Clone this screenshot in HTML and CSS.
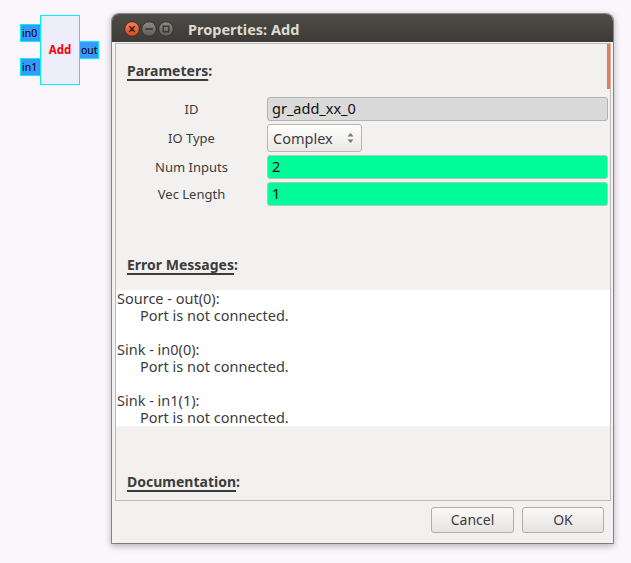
FILE: index.html
```html
<!DOCTYPE html>
<html>
<head>
<meta charset="utf-8">
<title>Properties: Add</title>
<link rel="stylesheet" href="styles.css">
</head>
<body>
<div class="node"><span class="node-name">Add</span></div>
<div class="port port-in0">in0</div>
<div class="port port-in1">in1</div>
<div class="port port-out">out</div>

<div class="window">
  <div class="titlebar">
    <div class="wbtns">
      <svg class="wbtn" width="16" height="16" viewBox="0 0 16 16">
        <defs>
          <linearGradient id="gc" x1="0" y1="0" x2="0" y2="1">
            <stop offset="0" stop-color="#f5835a"/>
            <stop offset="1" stop-color="#d9461a"/>
          </linearGradient>
        </defs>
        <circle cx="8" cy="8" r="7.3" fill="url(#gc)" stroke="#3a2a22" stroke-width="0.9"/>
        <path d="M5.6 5.6 L10.4 10.4 M10.4 5.6 L5.6 10.4" stroke="#3b1c10" stroke-width="1.4" stroke-linecap="round"/>
      </svg>
      <svg class="wbtn" width="16" height="16" viewBox="0 0 16 16">
        <defs>
          <linearGradient id="gg" x1="0" y1="0" x2="0" y2="1">
            <stop offset="0" stop-color="#8a8984"/>
            <stop offset="1" stop-color="#5e5d59"/>
          </linearGradient>
        </defs>
        <circle cx="8" cy="8" r="7.3" fill="url(#gg)" stroke="#2e2d2a" stroke-width="0.9"/>
        <path d="M4.8 8 L11.2 8" stroke="#34332f" stroke-width="1.6" stroke-linecap="round"/>
      </svg>
      <svg class="wbtn" width="16" height="16" viewBox="0 0 16 16">
        <circle cx="8" cy="8" r="7.3" fill="url(#gg)" stroke="#2e2d2a" stroke-width="0.9"/>
        <rect x="5.2" y="5.2" width="5.6" height="5.6" fill="none" stroke="#34332f" stroke-width="1.3"/>
      </svg>
    </div>
    <div class="title">Properties: Add</div>
  </div>
  <div class="wbody">
    <div class="frame">
      <div class="scroll">
        <div class="section-head"><span class="u">Parameters</span>:</div>
        <div class="params">
          <div class="row">
            <div class="label">ID</div>
            <div class="entry entry-gray">gr_add_xx_0</div>
          </div>
          <div class="row row-combo">
            <div class="label">IO Type</div>
            <div class="combo">
              <span class="combo-text">Complex</span>
              <svg class="combo-arrows" width="7" height="12" viewBox="0 0 7 12">
                <path d="M0.5 4.5 L3.5 1 L6.5 4.5 Z" fill="#77766f"/>
                <path d="M0.5 7.5 L3.5 11 L6.5 7.5 Z" fill="#77766f"/>
              </svg>
            </div>
          </div>
          <div class="row">
            <div class="label">Num Inputs</div>
            <div class="entry entry-green">2</div>
          </div>
          <div class="row">
            <div class="label">Vec Length</div>
            <div class="entry entry-green">1</div>
          </div>
        </div>
        <div class="section-head head-err"><span class="u">Error Messages</span>:</div>
        <div class="errors">
          <div class="eline">Source - out(0):</div>
          <div class="eline indent">Port is not connected.</div>
          <div class="eline"></div>
          <div class="eline">Sink - in0(0):</div>
          <div class="eline indent">Port is not connected.</div>
          <div class="eline"></div>
          <div class="eline">Sink - in1(1):</div>
          <div class="eline indent">Port is not connected.</div>
        </div>
        <div class="section-head head-doc"><span class="u">Documentation</span>:</div>
      </div>
      <div class="vscroll"></div>
    </div>
    <div class="actions">
      <div class="btn btn-cancel">Cancel</div>
      <div class="btn btn-ok">OK</div>
    </div>
  </div>
</div>
</body>
</html>
```

FILE: styles.css
```css
* { box-sizing: border-box; }
html, body { margin: 0; padding: 0; }
body {
  background: #fcf7fc;
  width: 631px;
  height: 563px;
  position: relative;
  overflow: hidden;
  font-family: "Noto Sans", "Open Sans", sans-serif;
  color: #3c3c3c;
}

/* canvas block */
.node {
  position: absolute;
  left: 40px;
  top: 15px;
  width: 40px;
  height: 70px;
  background: #eeeefa;
  border: 1px solid #00f0ff;
  display: flex;
  align-items: center;
  justify-content: center;
}
.node-name {
  color: #ff0000;
  font-weight: 700;
  font-size: 11.5px;
  line-height: 14px;
}
.port {
  position: absolute;
  height: 18px;
  background: #3799f8;
  border: 1px solid #00f0ff;
  color: #000;
  font-size: 10.5px;
  line-height: 16px;
  padding-left: 1px;
}
.port-in0 { left: 20px; top: 24px; width: 21px; }
.port-in1 { left: 20px; top: 58px; width: 21px; }
.port-out { left: 79px; top: 41px; width: 20px; padding-left: 1px; }

/* window */
.window {
  position: absolute;
  left: 112px;
  top: 14px;
  width: 501px;
  height: 529px;
  background: #f2f1f0;
  border-radius: 7px 7px 0 0;
  box-shadow: 0 0 0 1px rgba(70, 68, 64, 0.55), 0 2px 7px 1px rgba(0, 0, 0, 0.3);
  display: flex;
  flex-direction: column;
}
.titlebar {
  height: 28px;
  flex: none;
  background: linear-gradient(#4d4c47, #3c3b37);
  border-radius: 7px 7px 0 0;
  display: flex;
  align-items: center;
  padding-left: 12px;
  padding-top: 1px;
}
.wbtns { display: flex; gap: 1px; }
.wbtn { display: block; }
.title {
  margin-left: 14px;
  color: #dfdbd2;
  font-weight: 700;
  font-size: 14.5px;
  line-height: 18px;
}
.wbody {
  flex: 1;
  display: flex;
  flex-direction: column;
  padding: 1px 2px 0 3px;
}
.frame {
  height: 458px;
  flex: none;
  border: 1px solid #bebbb6;
  position: relative;
  overflow: hidden;
}
.scroll { padding-top: 17px; }
.section-head {
  margin-left: 11px;
  font-weight: 700;
  font-size: 14px;
  line-height: 20px;
  color: #3c3c3c;
}
.u {
  text-decoration: underline;
  text-decoration-thickness: 2px;
  text-underline-offset: 3px;
}
.params {
  margin-top: 16px;
  display: flex;
  flex-direction: column;
  gap: 3px;
}
.row {
  display: flex;
  height: 24px;
  align-items: center;
}
.row-combo { height: 28px; }
.label {
  width: 151px;
  flex: none;
  text-align: center;
  font-size: 13px;
  line-height: 18px;
  color: #3c3c3c;
}
.entry {
  flex: 1;
  height: 24px;
  margin-right: 2px;
  border: 1px solid #b6b4b0;
  border-radius: 3px;
  padding-left: 4px;
  font-size: 14.5px;
  line-height: 21px;
  color: #101010;
}
.entry-gray { background: #dadada; border-color: #b3b3b3; }
.entry-green { background: #00fc99; border-color: #a9cbbb; }
.combo {
  width: 95px;
  height: 28px;
  border: 1px solid #b9b6b1;
  border-radius: 3px;
  background: linear-gradient(#fdfdfc, #eceae7);
  display: flex;
  align-items: center;
  padding-left: 5px;
}
.combo-text {
  font-size: 14.5px;
  line-height: 20px;
  color: #3c3c3c;
}
.combo-arrows { margin-left: auto; margin-right: 7px; display: block; }
.head-err { margin-top: 49px; }
.errors {
  margin-top: 15px;
  background: #ffffff;
}
.eline {
  height: 17px;
  font-size: 14.5px;
  line-height: 17px;
  color: #3c3c3c;
  white-space: pre;
  padding-left: 1px;
}
.eline.indent { padding-left: 24px; }
.head-doc { margin-top: 46px; }
.vscroll {
  position: absolute;
  right: 0;
  top: 0;
  width: 3px;
  height: 45px;
  background: #f0774a;
}
.actions {
  display: flex;
  justify-content: flex-end;
  gap: 8px;
  padding: 6px 7px 0 0;
}
.btn {
  height: 26px;
  border: 1px solid #b0ada8;
  border-radius: 3px;
  background: linear-gradient(#faf9f8, #e6e4e1);
  font-size: 14px;
  line-height: 24px;
  text-align: center;
  color: #3c3c3c;
}
.btn-cancel { width: 83px; }
.btn-ok { width: 82px; }
```
